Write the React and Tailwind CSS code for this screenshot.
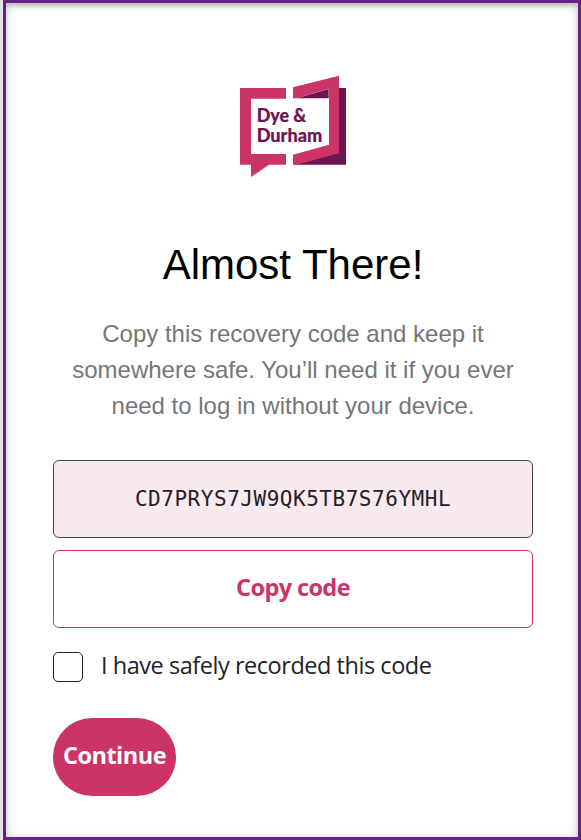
import { useState } from 'react'

function Logo() {
  return (
    <svg className="mx-auto w-[140px] h-[125px] translate-x-[2px]" viewBox="0 0 420 375" role="img" aria-label="Dye & Durham">
      <path fill="#6d1551" d="M342 69H363V299H207L312 267L342 240Z" />
      <path fill="#6d1551" d="M214 100L311 72V100Z" />
      <path fill="#cc3366" d="M45 69H183V101H78V267H183V299H132L78 336V299H45Z" />
      <path fill="#cc3366" d="M204 67L342 32V265L214 299H204V269L312 239V71L214 100H204Z" />
      <g className="font-['Lato',sans-serif] text-[54px] font-black" fill="#6d1551" stroke="#6d1551" strokeWidth="0.6">
        <text x="95" y="171" textLength="149" lengthAdjust="spacingAndGlyphs">Dye &amp;</text>
        <text x="95" y="231" textLength="197" lengthAdjust="spacingAndGlyphs">Durham</text>
      </g>
    </svg>
  )
}

export default function App() {
  const [recorded, setRecorded] = useState(false)

  return (
    <div className="h-[840px] w-[581px] bg-[#e6e4e8] pl-[3px] font-['Open_Sans',sans-serif]">
      <main className="flex h-full flex-col border-[3px] border-[#652289] bg-white pt-[62px] pr-[45px] pl-[47px] shadow-[inset_0_3px_2px_#c6c6c6,inset_0_2px_10px_rgba(0,0,0,0.22)]">
        <Logo />

        <h1 className="mt-[50px] text-center font-['Liberation_Sans',sans-serif] text-[42px] leading-[50px] text-black">
          Almost There!
        </h1>
        <p className="mt-[26px] text-center font-['Liberation_Sans',sans-serif] text-[24px] leading-9 text-[#747679]">
          Copy this recovery code and keep it
          <br />
          somewhere safe. You’ll need it if you ever
          <br />
          need to log in without your device.
        </p>

        <div className="mt-9 flex h-[78px] shrink-0 items-center justify-center rounded-md border border-[#41454c] bg-[#fae9ef] pt-[2px] font-['DejaVu_Sans_Mono',monospace] text-[21px] tracking-[0.53px] text-[#1e212a]">
          CD7PRYS7JW9QK5TB7S76YMHL
        </div>
        <button className="mt-3 h-[78px] shrink-0 rounded-md border border-[#cc3366] bg-white pb-[2px] text-[23.5px] font-bold tracking-[-0.6px] text-[#cc3366]">
          Copy code
        </button>

        <label className="mt-6 flex h-[30px] items-center text-[23.5px] tracking-[-0.46px] text-[#1e212a]">
          <input
            type="checkbox"
            checked={recorded}
            onChange={(e) => setRecorded(e.target.checked)}
            className="mr-[18px] size-[30px] appearance-none rounded-[5px] border border-[#1e212a] checked:bg-[#cc3366]"
          />
          <span className="-mt-[2px] whitespace-nowrap">I have safely recorded this code</span>
        </label>

        <button className="mt-9 h-[78px] w-[123px] shrink-0 rounded-full bg-[#cc3366] pb-[2px] text-[23.5px] font-bold tracking-[-0.5px] text-white">
          Continue
        </button>
      </main>
    </div>
  )
}
